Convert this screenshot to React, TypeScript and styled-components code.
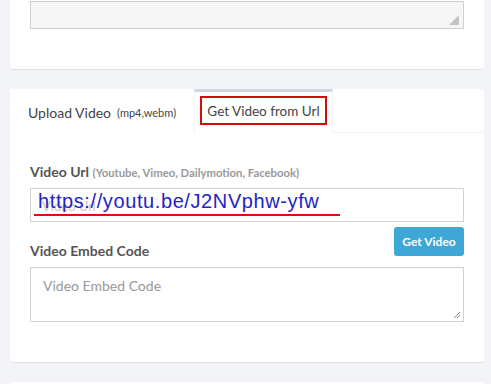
import React from "react";
import styled, { createGlobalStyle } from "styled-components";

const Global = createGlobalStyle`
  html, body { margin: 0; padding: 0; background: #f2f4f7; }
  body { font-family: Lato, "Open Sans", sans-serif; color: #444; overflow: hidden; }
  * { box-sizing: border-box; }
`;

const Page = styled.div`
  padding: 0 7px 0 10px;
  display: flex;
  flex-direction: column;
  gap: 20px;
  margin-top: -10px;
`;

const Card = styled.div<{ $pad?: string }>`
  background: #fff;
  border-radius: 3px;
  box-shadow: 0 1px 1px rgba(0, 0, 0, 0.08);
  padding: ${(p) => p.$pad || "0"};
`;

const TopArea = styled.div`
  position: relative;
  height: 28px;
  background: #f6f6f6;
  border: 1px solid #cfcfcf;
`;

const Grip = styled.div`
  position: absolute;
  right: 4px;
  bottom: 3px;
  width: 0;
  height: 0;
  border-left: 10px solid transparent;
  border-bottom: 10px solid #c2c2c2;
`;

const TabBar = styled.div`
  display: flex;
  height: 44px;
  border-bottom: 1px solid #f1f1f1;
  align-items: stretch;
`;

const Tab = styled.div<{ $active?: boolean }>`
  display: flex;
  align-items: center;
  font-size: 14px;
  color: #444;
  padding: ${(p) => (p.$active ? "0 5px" : "0 0 0 17px")};
  width: ${(p) => (p.$active ? "139px" : "184px")};
  border-top: 3px solid ${(p) => (p.$active ? "#d2d6de" : "transparent")};
  border-left: 1px solid ${(p) => (p.$active ? "#f2f2f2" : "transparent")};
  border-right: 1px solid ${(p) => (p.$active ? "#f2f2f2" : "transparent")};
  margin-bottom: -1px;
  background: #fff;
`;

const Small = styled.span`
  font-size: 11px;
  margin-left: 6px;
  color: #444;
`;

const RedBox = styled.div`
  border: 2px solid #d10d0d;
  height: 29px;
  width: 127px;
  display: flex;
  align-items: center;
  justify-content: center;
  margin-top: -4px;
  font-size: 13.5px;
`;

const Body = styled.div`
  padding: 30px 20px 40px 20px;
`;

const Label = styled.div`
  font-size: 14px;
  font-weight: 700;
  color: #555;
  line-height: 18px;
`;

const Hint = styled.span`
  font-size: 11.3px;
  color: #999;
  font-weight: 700;
`;

const InputWrap = styled.div`
  position: relative;
  margin-top: 6px;
  height: 34px;
  border: 1px solid #d2d2d2;
  background: #fff;
`;

const Placeholder = styled.div`
  position: absolute;
  left: 11px;
  top: 9px;
  font-size: 13px;
  color: #c8c8c8;
`;

const Annot = styled.div`
  position: absolute;
  left: 7px;
  top: 1px;
  font-family: "Liberation Sans", sans-serif;
  font-size: 20px;
  letter-spacing: 0.6px;
  color: #2424c4;
`;

const Underline = styled.div`
  position: absolute;
  left: 3px;
  top: 25px;
  width: 306px;
  height: 2px;
  background: #d81010;
`;

const Row = styled.div`
  display: flex;
  justify-content: flex-end;
  margin-top: 5px;
`;

const Button = styled.button`
  width: 70px;
  height: 29px;
  border: none;
  border-radius: 3px;
  background: #3ea7d6;
  color: #fff;
  font-family: Lato, sans-serif;
  font-size: 12px;
  font-weight: 700;
`;

const EmbedLabel = styled(Label)`
  margin-top: -14px;
`;

const EmbedArea = styled.div`
  position: relative;
  margin-top: 7px;
  height: 55px;
  border: 1px solid #d2d2d2;
  padding: 9px 12px;
  font-size: 14px;
  color: #999;
`;

const Resize = styled.svg`
  position: absolute;
  right: 2px;
  bottom: 2px;
`;

export default function App() {
  return (
    <>
      <Global />
      <Page>
        <Card $pad="11px 20px 40px 20px">
          <TopArea>
            <Grip />
          </TopArea>
        </Card>
        <Card>
          <TabBar>
            <Tab>
              Upload Video <Small>(mp4,webm)</Small>
            </Tab>
            <Tab $active>
              <RedBox>Get Video from Url</RedBox>
            </Tab>
          </TabBar>
          <Body>
            <Label>
              Video Url <Hint>(Youtube, Vimeo, Dailymotion, Facebook)</Hint>
            </Label>
            <InputWrap>
              <Placeholder>Video Url</Placeholder>
              <Annot>https://youtu.be/J2NVphw-yfw</Annot>
              <Underline />
            </InputWrap>
            <Row>
              <Button>Get Video</Button>
            </Row>
            <EmbedLabel>Video Embed Code</EmbedLabel>
            <EmbedArea>
              Video Embed Code
              <Resize width="8" height="8" viewBox="0 0 8 8">
                <path d="M7 1 L1 7 M7 4 L4 7" stroke="#888" strokeWidth="1" />
              </Resize>
            </EmbedArea>
          </Body>
        </Card>
        <Card $pad="20px" />
      </Page>
    </>
  );
}
